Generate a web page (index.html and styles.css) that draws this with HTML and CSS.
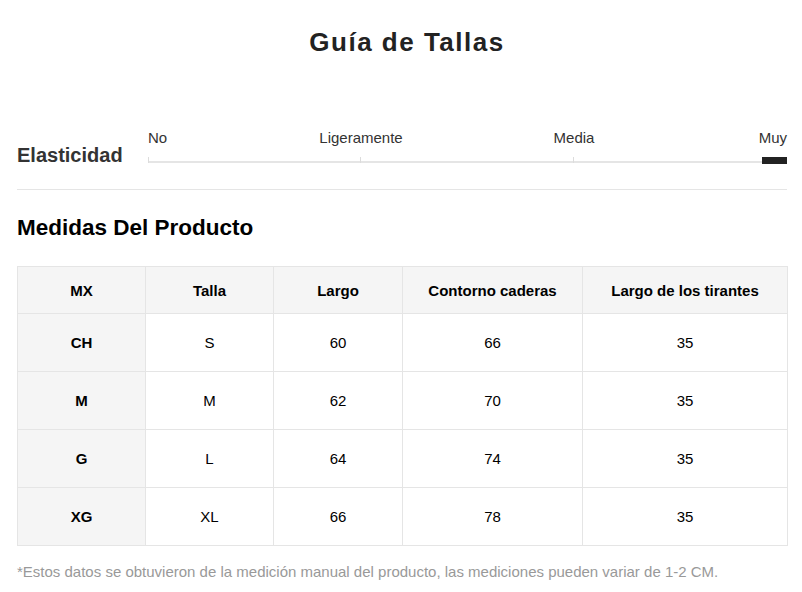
FILE: index.html
```html
<!DOCTYPE html>
<html lang="es">
<head>
<meta charset="utf-8">
<title>Guía de Tallas</title>
<link rel="stylesheet" href="styles.css">
</head>
<body>
<div class="page">
  <h1 class="title">Guía de Tallas</h1>

  <div class="elastic">
    <div class="elastic-label">Elasticidad</div>
    <div class="scale">
      <div class="scale-labels">
        <span class="lbl lbl-first">No</span>
        <span class="lbl lbl-mid">Ligeramente</span>
        <span class="lbl lbl-mid">Media</span>
        <span class="lbl lbl-last">Muy</span>
      </div>
      <div class="track">
        <span class="tick tick-0"></span>
        <span class="tick tick-1"></span>
        <span class="tick tick-2"></span>
        <span class="marker"></span>
      </div>
    </div>
  </div>

  <div class="divider"></div>

  <h2 class="section-title">Medidas Del Producto</h2>

  <table class="sizes">
    <colgroup>
      <col class="c1"><col class="c2"><col class="c3"><col class="c4"><col class="c5">
    </colgroup>
    <thead>
      <tr><th>MX</th><th>Talla</th><th>Largo</th><th>Contorno caderas</th><th>Largo de los tirantes</th></tr>
    </thead>
    <tbody>
      <tr><th>CH</th><td>S</td><td>60</td><td>66</td><td>35</td></tr>
      <tr><th>M</th><td>M</td><td>62</td><td>70</td><td>35</td></tr>
      <tr><th>G</th><td>L</td><td>64</td><td>74</td><td>35</td></tr>
      <tr><th>XG</th><td>XL</td><td>66</td><td>78</td><td>35</td></tr>
    </tbody>
  </table>

  <p class="note">*Estos datos se obtuvieron de la medición manual del producto, las mediciones pueden variar de 1-2 CM.</p>
</div>
</body>
</html>
```

FILE: styles.css
```css
html, body {
  margin: 0;
  padding: 0;
  background: #fff;
}

.page {
  padding: 0 15px 0 17px;
  font-family: "Liberation Sans", Arial, sans-serif;
  color: #222;
}

.title {
  margin: 0;
  padding: 28px 0 0 10px;
  font-size: 26px;
  line-height: 28px;
  font-weight: 700;
  text-align: center;
  color: #222;
  letter-spacing: 1.5px;
}

.elastic {
  display: flex;
  align-items: flex-end;
  margin-top: 74px;
}

.elastic-label {
  flex: 0 0 131px;
  font-size: 20px;
  line-height: 22px;
  font-weight: 700;
  color: #333;
  margin-bottom: -2px;
}

.scale {
  flex: 1 1 auto;
  display: flex;
  flex-direction: column;
  gap: 11px;
}

.scale-labels {
  display: grid;
  grid-template-columns: 1fr 2fr 2fr 1fr;
  font-size: 15px;
  line-height: 16px;
  color: #333;
}

.lbl-first { text-align: left; }
.lbl-mid { text-align: center; }
.lbl-last { text-align: right; }

.track {
  position: relative;
  height: 7px;
}

.track::before {
  content: "";
  position: absolute;
  left: 0;
  right: 0;
  bottom: 1px;
  height: 2px;
  background: #e5e5e5;
}

.tick {
  position: absolute;
  bottom: 1px;
  width: 1px;
  height: 6px;
  background: #dcdcdc;
}

.tick-0 { left: 0; }
.tick-1 { left: 33.2%; }
.tick-2 { left: 66.5%; }

.marker {
  position: absolute;
  right: 0;
  top: 0;
  width: 25px;
  height: 7px;
  background: #222;
}

.divider {
  margin-top: 25px;
  height: 1px;
  background: #e5e5e5;
}

.section-title {
  margin: 25px 0 0;
  font-size: 22.5px;
  line-height: 26px;
  font-weight: 700;
  color: #000;
}

.sizes {
  margin-top: 25px;
  width: 771px;
  border-collapse: collapse;
  table-layout: fixed;
  font-size: 15px;
  color: #000;
}

.c1 { width: 128px; }
.c2 { width: 128px; }
.c3 { width: 129px; }
.c4 { width: 180px; }
.c5 { width: 205px; }

.sizes th,
.sizes td {
  border: 1px solid #e5e5e5;
  text-align: center;
  vertical-align: middle;
  padding: 0;
}

.sizes thead th {
  height: 46px;
  background: #f5f5f5;
  font-weight: 700;
}

.sizes tbody th {
  background: #f5f5f5;
  font-weight: 700;
}

.sizes tbody th,
.sizes tbody td {
  height: 57px;
}

.sizes tbody td {
  font-weight: 400;
}

.note {
  margin: 18px 0 0;
  font-size: 15px;
  line-height: 16px;
  color: #999;
}
```
